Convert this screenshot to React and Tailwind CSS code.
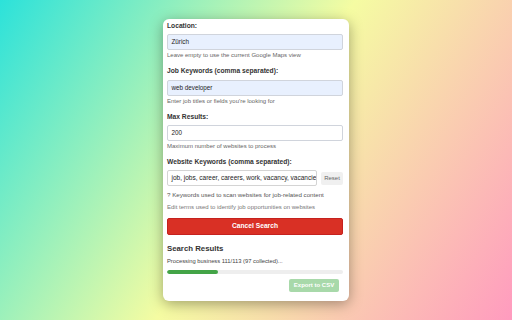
export default function App() {
  return (
    <div className="w-[512px] h-[320px] overflow-hidden bg-[linear-gradient(122deg,#2ce2da_0%,#f5fca2_50%,#ff9bbf_100%)] flex justify-center font-['Liberation_Sans',Arial,sans-serif]">
      <div className="mt-[19px] w-[186px] h-[282px] bg-white rounded-[6px] shadow-[0_3px_14px_rgba(0,0,0,0.35)] pl-[4px] pr-[6px] pt-[1.5px] text-[#333]">
        <Group label="Location:" value="Zürich" auto helper="Leave empty to use the current Google Maps view" />
        <Group label="Job Keywords (comma separated):" value="web developer" auto helper="Enter job titles or fields you're looking for" />
        <Group label="Max Results:" value="200" helper="Maximum number of websites to process" />
        <div className="mb-[7px]">
          <div className="text-[6.7px] leading-[9px] font-bold mb-[4px]">Website Keywords (comma separated):</div>
          <div className="flex items-center gap-[4px]">
            <div className="flex-1 h-[15.5px] border border-[#d4d4d4] rounded-[2px] bg-white px-[3.5px] flex items-center text-[6.5px] text-[#222] whitespace-nowrap overflow-hidden">
              job, jobs, career, careers, work, vacancy, vacancies
            </div>
            <div className="w-[22px] h-[13px] mt-[2px] bg-[#f0f0f0] rounded-[2px] flex items-center justify-center text-[6px] text-[#666]">Reset</div>
          </div>
          <div className="text-[6.2px] leading-[8px] text-[#555] mt-[5px]">? Keywords used to scan websites for job-related content</div>
          <div className="text-[6px] leading-[8px] text-[#777] mt-[4.5px]">Edit terms used to identify job opportunities on websites</div>
        </div>
        <div className="h-[17px] bg-[#d93025] border border-[#c5221f] rounded-[2px] flex items-center justify-center text-white text-[6.7px] font-bold">Cancel Search</div>
        <div className="text-[7.8px] leading-[10px] font-bold text-[#333] mt-[9px]">Search Results</div>
        <div className="text-[5.8px] leading-[8px] text-[#444] mt-[3px]">Processing business 111/113 (97 collected)...</div>
        <div className="h-[4.5px] bg-[#eeeeee] rounded-full mt-[4.5px] overflow-hidden">
          <div className="h-full bg-[#43a447] rounded-full" style={{ width: "29%" }} />
        </div>
        <div className="flex justify-end pr-[4px] mt-[5px]">
          <div className="w-[50px] h-[13px] bg-[#a8d9aa] rounded-[2px] flex items-center justify-center text-white text-[6px] font-bold">Export to CSV</div>
        </div>
      </div>
    </div>
  );
}

function Group({ label, value, auto, helper }) {
  return (
    <div className="mb-[7px]">
      <div className="text-[6.7px] leading-[9px] font-bold mb-[4.5px]">{label}</div>
      <div className={`h-[16px] border border-[#d0d4dc] rounded-[2px] px-[3.5px] flex items-center text-[6.3px] text-[#222] ${auto ? "bg-[#e8f0fe]" : "bg-white"}`}>{value}</div>
      <div className="text-[6px] leading-[8px] text-[#666] mt-[1px]">{helper}</div>
    </div>
  );
}
